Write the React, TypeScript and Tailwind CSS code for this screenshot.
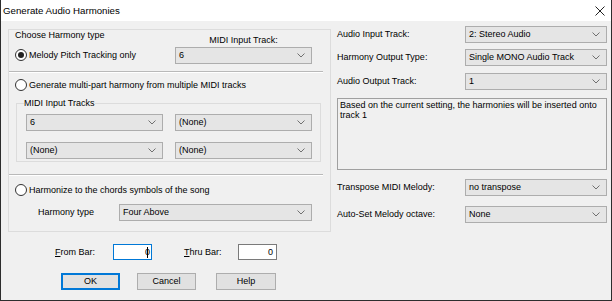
import clsx from "clsx";

const font = "font-['Liberation_Sans',Arial,sans-serif]";

function Chevron() {
  return (
    <svg width="8" height="5" viewBox="0 0 8 5" className="shrink-0">
      <path d="M0.5 0.5L4 4L7.5 0.5" fill="none" stroke="#707070" strokeWidth="1" />
    </svg>
  );
}

function Combo({ value, className }: { value: string; className: string }) {
  return (
    <div
      className={clsx(
        "flex h-[17px] items-center justify-between border border-[#adadad] bg-[#e5e5e5] pl-[3px] pr-[6px]",
        className
      )}
    >
      <span className="leading-none">{value}</span>
      <Chevron />
    </div>
  );
}

function Radio({ label, checked = false }: { label: string; checked?: boolean }) {
  return (
    <div className="flex h-[12px] items-center gap-[2px] pl-[6px]">
      <span className="flex h-[12px] w-[12px] items-center justify-center rounded-full border border-[#333] bg-white">
        {checked && <span className="h-[6px] w-[6px] rounded-full bg-[#222]" />}
      </span>
      <span className="leading-none">{label}</span>
    </div>
  );
}

function Separator() {
  return <div className="mr-[7px] h-[2px] border-t border-b border-t-[#b9b9b9] border-b-white" />;
}

function Row({ label, value, className }: { label: string; value: string; className: string }) {
  return (
    <div className={clsx("flex items-center", className)}>
      <span className="w-[128px] leading-none">{label}</span>
      <Combo value={value} className="w-[142px]" />
    </div>
  );
}

function Button({ label, primary = false, className }: { label: string; primary?: boolean; className: string }) {
  return (
    <div
      className={clsx(
        "flex h-[17px] items-center justify-center bg-[#e1e1e1] leading-none",
        primary ? "border-2 border-[#0078d7]" : "border border-[#adadad]",
        className
      )}
    >
      {label}
    </div>
  );
}

export default function App() {
  return (
    <div className={clsx("flex h-[301px] w-[612px] flex-col border-x border-b border-[#2d2d2d] bg-[#f0f0f0] text-[9px] text-black", font)}>
      {/* title bar */}
      <div className="flex h-[21px] shrink-0 items-center justify-between bg-white pl-[2px] pr-[6px]">
        <span className="text-[9.7px] leading-none">Generate Audio Harmonies</span>
        <svg width="10" height="10" viewBox="0 0 10 10">
          <path d="M0.5 0.5L9.5 9.5M9.5 0.5L0.5 9.5" stroke="#222" strokeWidth="1" />
        </svg>
      </div>

      <div className="flex flex-1">
        {/* left column */}
        <div className="ml-[7px] flex w-[323px] flex-col pt-[8px]">
          <div className="flex h-[203px] flex-col border border-[#dcdcdc]">
            {/* melody pitch section */}
            <div className="flex h-[41px]">
              <div className="flex w-[166px] flex-col">
                <span className="pl-[6px] leading-[11px]">Choose Harmony type</span>
                <div className="mt-[8px]">
                  <Radio label="Melody Pitch Tracking only" checked />
                </div>
              </div>
              <div className="flex w-[137px] flex-col items-center">
                <span className="mt-[5px] leading-[11px]">MIDI Input Track:</span>
                <Combo value="6" className="mt-[1px] w-[137px]" />
              </div>
            </div>
            <Separator />

            {/* multi-part section */}
            <div className="mt-[6px]">
              <Radio label="Generate multi-part harmony from multiple MIDI tracks" />
            </div>
            <fieldset className="ml-[7px] mt-[7px] w-[305px] border border-[#dcdcdc] pb-[2px] pl-[9px]">
              <legend className="ml-[-2px] bg-[#f0f0f0] px-[0px] leading-[11px]">MIDI Input Tracks</legend>
              <div className="mt-[5px] flex gap-[12px]">
                <Combo value="6" className="w-[137px]" />
                <Combo value="(None)" className="w-[137px]" />
              </div>
              <div className="mt-[11px] flex gap-[12px]">
                <Combo value="(None)" className="w-[137px]" />
                <Combo value="(None)" className="w-[137px]" />
              </div>
            </fieldset>
            <div className="mt-[12px]">
              <Separator />
            </div>

            {/* chords section */}
            <div className="mt-[8px]">
              <Radio label="Harmonize to the chords symbols of the song" />
            </div>
            <div className="mt-[8px] flex items-center pl-[29px]">
              <span className="w-[81px] leading-none">Harmony type</span>
              <Combo value="Four Above" className="w-[193px]" />
            </div>
          </div>

          {/* bar range */}
          <div className="mt-[12px] flex h-[16px] items-center">
            <span className="ml-[47px] w-[58px] leading-none">
              <span className="underline">F</span>rom Bar:
            </span>
            <div className="flex h-[16px] w-[39px] items-center justify-end border border-[#0078d7] bg-white pr-[3px] leading-none">
              <span>0</span>
              <span className="ml-[-3px] h-[11px] w-px bg-black" />
            </div>
            <span className="ml-[32px] w-[54px] leading-none">
              <span className="underline">T</span>hru Bar:
            </span>
            <div className="flex h-[16px] w-[39px] items-center justify-end border border-[#7a7a7a] bg-white pr-[3px] leading-none">
              0
            </div>
          </div>

          {/* buttons */}
          <div className="mt-[13px] flex">
            <Button label="OK" primary className="ml-[53px] w-[59px]" />
            <Button label="Cancel" className="ml-[17px] w-[59px]" />
            <Button label="Help" className="ml-[20px] w-[60px]" />
          </div>
        </div>

        {/* right column */}
        <div className="ml-[6px] flex w-[270px] flex-col pt-[5px]">
          <Row label="Audio Input Track:" value="2: Stereo Audio" className="" />
          <Row label="Harmony Output Type:" value="Single MONO Audio Track" className="mt-[6px]" />
          <Row label="Audio Output Track:" value="1" className="mt-[7px]" />
          <div className="mt-[8px] h-[72px] border border-[#a0a0a0] bg-[#f0f0f0] px-[2px] pt-[1px] leading-[10px]">
            Based on the current setting, the harmonies will be inserted onto
            <br />
            track 1
          </div>
          <Row label="Transpose MIDI Melody:" value="no transpose" className="mt-[9px]" />
          <Row label="Auto-Set Melody octave:" value="None" className="mt-[10px]" />
        </div>
      </div>
    </div>
  );
}
